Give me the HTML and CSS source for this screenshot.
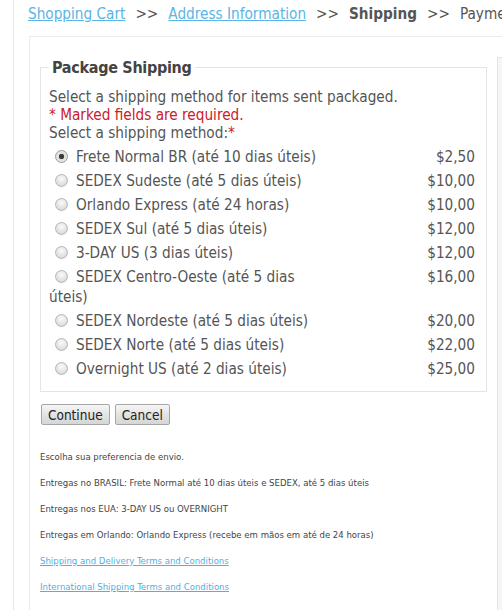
FILE: index.html
```html
<!DOCTYPE html>
<html>
<head>
<meta charset="utf-8">
<link rel="stylesheet" href="styles.css">
</head>
<body>
<div class="page">
  <div class="crumbs">
    <a href="#">Shopping Cart</a><span class="sep">&gt;&gt;</span><a href="#">Address Information</a><span class="sep">&gt;&gt;</span><b>Shipping</b><span class="sep">&gt;&gt;</span><span class="nw">Payment Information</span>
  </div>
  <div class="box">
    <div class="main">
      <fieldset class="pkg">
        <legend>Package Shipping</legend>
        <div class="intro first">Select a shipping method for items sent packaged.</div>
        <div class="req">* Marked fields are required.</div>
        <div class="intro">Select a shipping method:<span class="star">*</span></div>
        <div class="methods">
          <label class="row"><span class="name"><span class="radio on"></span>Frete Normal BR (até 10 dias úteis)</span><span class="price">$2,50</span></label>
          <label class="row"><span class="name"><span class="radio"></span>SEDEX Sudeste (até 5 dias úteis)</span><span class="price">$10,00</span></label>
          <label class="row"><span class="name"><span class="radio"></span>Orlando Express (até 24 horas)</span><span class="price">$10,00</span></label>
          <label class="row"><span class="name"><span class="radio"></span>SEDEX Sul (até 5 dias úteis)</span><span class="price">$12,00</span></label>
          <label class="row"><span class="name"><span class="radio"></span>3-DAY US (3 dias úteis)</span><span class="price">$12,00</span></label>
          <label class="row"><span class="name"><span class="radio"></span>SEDEX Centro-Oeste (até 5 dias úteis)</span><span class="price">$16,00</span></label>
          <label class="row"><span class="name"><span class="radio"></span>SEDEX Nordeste (até 5 dias úteis)</span><span class="price">$20,00</span></label>
          <label class="row"><span class="name"><span class="radio"></span>SEDEX Norte (até 5 dias úteis)</span><span class="price">$22,00</span></label>
          <label class="row"><span class="name"><span class="radio"></span>Overnight US (até 2 dias úteis)</span><span class="price">$25,00</span></label>
        </div>
      </fieldset>
      <div class="buttons">
        <button class="btn">Continue</button><button class="btn">Cancel</button>
      </div>
      <div class="notes">
        <p>Escolha sua preferencia de envio.</p>
        <p>Entregas no BRASIL: Frete Normal até 10 dias úteis e SEDEX, até 5 dias úteis</p>
        <p>Entregas nos EUA: 3-DAY US ou OVERNIGHT</p>
        <p>Entregas em Orlando: Orlando Express (recebe em mãos em até de 24 horas)</p>
        <p><a href="#">Shipping and Delivery Terms and Conditions</a></p>
        <p><a href="#">International Shipping Terms and Conditions</a></p>
      </div>
    </div>
    <div class="side"></div>
  </div>
</div>
</body>
</html>
```
FILE: styles.css
```css
html, body {
  margin: 0;
  padding: 0;
  background: #fff;
  overflow: hidden;
}
body {
  font-family: "DejaVu Sans Condensed", "DejaVu Sans", sans-serif;
  color: #555;
  font-size: 15.2px;
  width: 502px;
  height: 610px;
}
.page {
  margin-left: 13px;
  border-left: 1px solid #e6e6e6;
  padding-left: 14px;
  height: 610px;
  width: 700px;
  overflow: hidden;
}
.crumbs {
  height: 28px;
  line-height: 28px;
  white-space: nowrap;
  color: #555;
  font-size: 15.2px;
}
.crumbs a {
  color: #5ab4e6;
  text-decoration: underline;
}
.crumbs .sep {
  margin: 0 10px;
}
.crumbs b {
  color: #555;
}
.box {
  margin-top: 8px;
  margin-left: 1px;
  border: 1px solid #ececec;
  display: flex;
  align-items: flex-start;
  height: 600px;
}
.main {
  width: 456px;
  padding-left: 10px;
  flex: none;
}
.side {
  margin-top: 20px;
  margin-left: 1px;
  width: 200px;
  height: 580px;
  border: 1px solid #e6e6e6;
  background: #f6f6f6;
}
.pkg {
  margin: 21px 0 0 0;
  border: 1px solid #e4e4e4;
  padding: 0 11px 10px 8px;
  width: 426px;
}
.pkg legend {
  padding: 0 3px;
  font-weight: bold;
  font-size: 16px;
  letter-spacing: -0.3px;
  color: #444;
}
.intro, .req {
  line-height: 18px;
}
.intro.first {
  margin-top: 11px;
}
.req {
  color: #c8202a;
}
.star {
  color: #c8202a;
}
.methods {
  margin-top: 3px;
}
.row {
  display: grid;
  grid-template-columns: 280px 1fr;
  padding: 2px 0;
  line-height: 20px;
}
.radio {
  display: inline-block;
  width: 11px;
  height: 11px;
  border-radius: 50%;
  border: 1px solid #b5b5b5;
  background: radial-gradient(circle at 50% 35%, #fafafa 0%, #e2e2e2 60%, #cbcbcb 100%);
  margin: 0 8px 0 6px;
  vertical-align: -1px;
}
.radio.on {
  background: radial-gradient(circle, #333 0, #444 2.5px, #ddd 3px, #f0f0f0 100%);
  border-color: #9a9a9a;
}
.price {
  text-align: right;
}
.buttons {
  margin-top: 12px;
  display: flex;
  gap: 5px;
  padding-left: 1px;
}
.btn {
  font-family: "DejaVu Sans Condensed", "DejaVu Sans", sans-serif;
  font-size: 13.5px;
  color: #222;
  height: 21px;
  padding: 0 6px;
  border: 1px solid #a6a6a6;
  border-radius: 2px;
  background: linear-gradient(#f6f6f6, #e2e2e2 55%, #d6d6d6);
}
.notes {
  margin-top: 19px;
  font-size: 9.5px;
  color: #444;
}
.notes p {
  margin: 0;
  line-height: 26px;
  height: 26px;
}
.notes a {
  color: #4fb0e6;
}
```
